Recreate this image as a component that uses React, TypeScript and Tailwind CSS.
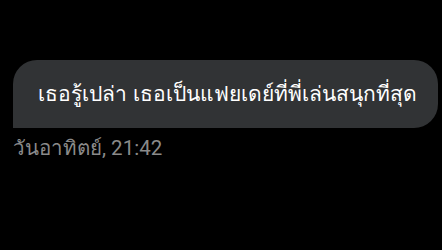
export default function App() {
  return (
    <div className="relative h-[250px] w-[442px] overflow-hidden bg-black font-['Roboto','Noto_Sans',sans-serif]">
      <div className="flex flex-col items-start pl-[13px] pt-[60px]">
        {/* Bubble */}
        <div className="flex h-[68px] w-[425px] items-center justify-center rounded-[24px] rounded-bl-none bg-[#313335] pl-[4px]">
          <span className="text-[21px] leading-none text-white">เธอรู้เปล่า เธอเป็นแฟยเดย์ที่พี่เล่นสนุกที่สุด</span>
        </div>

        {/* Time */}
        <div className="mt-[10px] text-[20.5px] leading-none text-[#8a8a8a]">วันอาทิตย์, 21:42</div>
      </div>
    </div>
  );
}
